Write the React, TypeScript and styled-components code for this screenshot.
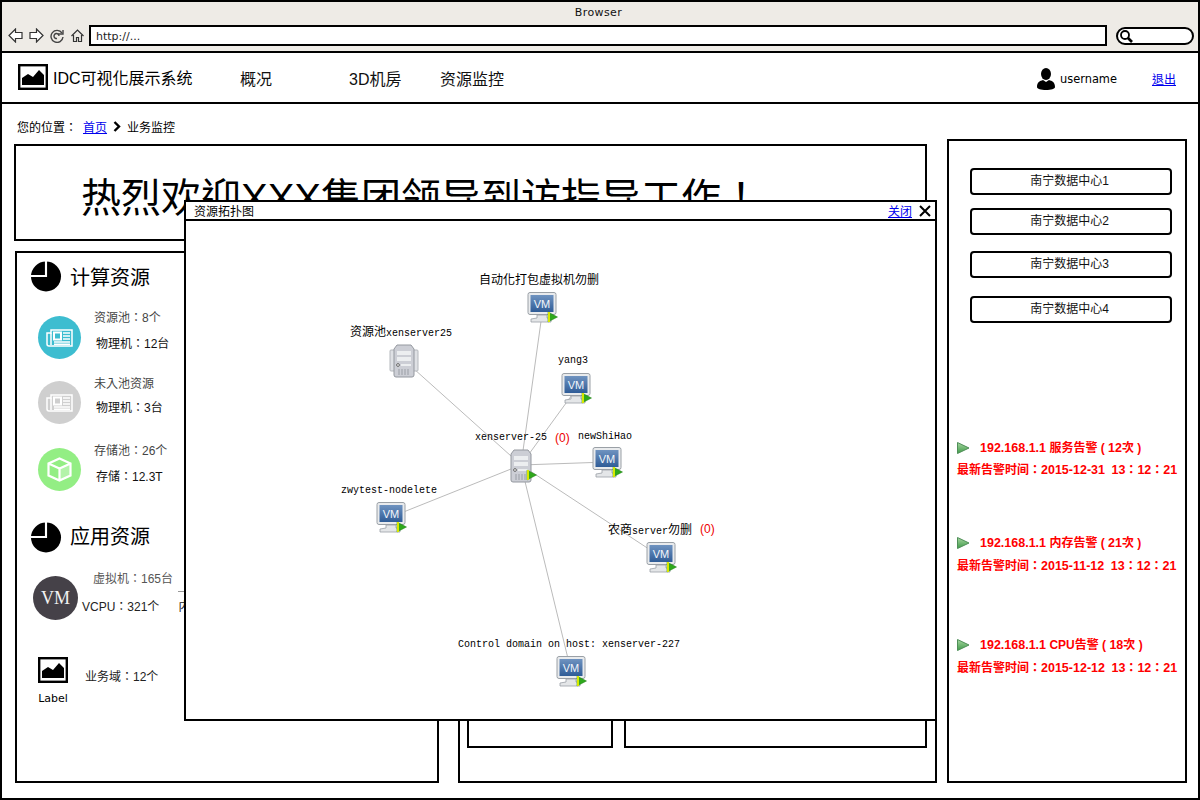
import styled, { createGlobalStyle } from 'styled-components';

const GlobalStyle = createGlobalStyle`
    * { box-sizing: border-box; }
    body {
        margin: 0;
        background: #fff;
        color: #000;
        font-family: 'Liberation Sans', 'Noto Sans CJK TC', sans-serif;
    }
    a { color: #0000ee; text-decoration: underline; }
`;

const ImageIcon = () => (
    <svg width='30' height='26' viewBox='0 0 30 26'>
        <rect x='1.2' y='1.2' width='27.6' height='23.6' fill='#fff' stroke='#000' strokeWidth='2.4' />
        <path d='M4 21 V14 L10 10 L15 13 L21 6 L26 11 V21 Z' fill='#000' />
    </svg>
);

const PieIcon = () => (
    <svg width='32' height='31' viewBox='0 0 32 32'>
        <circle cx='16' cy='16' r='15.5' fill='#000' />
        <path d='M16 0 V15.5 H0' fill='none' stroke='#fff' strokeWidth='2.2' />
    </svg>
);

const NewsIcon = () => (
    <svg width='27' height='18' viewBox='0 0 27 18' fill='none' stroke='#fff' strokeWidth='1.5'>
        <path d='M5 1 H26 V17 H3 a2 2 0 0 1 -2 -2 V4 H5 Z' />
        <path d='M5 4 V16' />
        <rect x='8' y='3.5' width='7' height='7' strokeWidth='2' />
        <path d='M17 4 H24 M17 7 H24 M17 10 H24 M8 13 H24 M8 15.2 H24' />
    </svg>
);

const CubeIcon = () => (
    <svg width='25' height='25' viewBox='0 0 25 25'>
        <path d='M13 12 L23 7 V18 L13 23 Z' fill='#fff' opacity='0.3' />
        <path
            d='M12.5 1.5 L23.5 6.5 V18.5 L12.5 23.5 L1.5 18.5 V6.5 Z M1.5 6.5 L12.5 11.5 L23.5 6.5 M12.5 11.5 V23.5'
            fill='none'
            stroke='#fff'
            strokeWidth='2.2'
        />
    </svg>
);

const UserIcon = () => (
    <svg width='18' height='22' viewBox='0 0 18 22'>
        <ellipse cx='9' cy='6' rx='5' ry='6' fill='#000' />
        <path d='M0 19 C0 14 3 13 6 12 L9 14 L12 12 C15 13 18 14 18 19 C18 21 14 22 9 22 C4 22 0 21 0 19 Z' fill='#000' />
    </svg>
);

const BackIcon = ({ flip }: { flip?: boolean }) => (
    <svg width='15' height='15' viewBox='0 0 15 15' style={flip ? { transform: 'scaleX(-1)' } : undefined}>
        <path d='M1 7.5 L7.5 1 V4.5 H14 V10.5 H7.5 V14 Z' fill='#fff' stroke='#333' strokeWidth='1.2' />
    </svg>
);

const ReloadIcon = () => (
    <svg width='14' height='14' viewBox='0 0 14 14' fill='none' stroke='#444' strokeWidth='1.4'>
        <path d='M12 4 A6 6 0 1 0 13 8' />
        <path d='M9 7 A2.5 2.5 0 1 0 7 9.5' />
        <path d='M8 5 H13 V1' />
    </svg>
);

const HomeIcon = () => (
    <svg width='13' height='13' viewBox='0 0 13 13' fill='none' stroke='#333' strokeWidth='1.2'>
        <path d='M0.5 7 L6.5 1 L12.5 7' />
        <path d='M2.5 6 V12.5 H5.5 V8.5 H7.5 V12.5 H10.5 V6' />
    </svg>
);

const SearchIcon = () => (
    <svg width='14' height='14' viewBox='0 0 14 14' fill='none' stroke='#000'>
        <circle cx='6' cy='6' r='4' strokeWidth='1.8' />
        <path d='M9 9 L13 13' strokeWidth='2.6' />
    </svg>
);

const ChevronIcon = () => (
    <svg width='8' height='11' viewBox='0 0 8 11' fill='none' stroke='#000' strokeWidth='2.4'>
        <path d='M1.5 1 L6 5.5 L1.5 10' />
    </svg>
);

const CloseIcon = () => (
    <svg width='12' height='12' viewBox='0 0 12 12' stroke='#000' strokeWidth='2'>
        <path d='M1 1 L11 11 M11 1 L1 11' />
    </svg>
);

const PlayBadge = ({ x, y }: { x: number; y: number }) => (
    <>
        <path d={`M${x} ${y} L${x + 9.5} ${y + 5} L${x} ${y + 10} Z`} fill='#2fa81c' stroke='#1d7d12' strokeWidth='0.5' />
        <path d={`M${x + 1} ${y} V${y + 10}`} stroke='#d6e800' strokeWidth='2' />
    </>
);

const VmIcon = () => (
    <svg width='32' height='32' viewBox='0 0 32 32'>
        <defs>
            <linearGradient id='vmScreen' x1='0' y1='0' x2='0' y2='1'>
                <stop offset='0' stopColor='#6f93c0' />
                <stop offset='1' stopColor='#2f5c97' />
            </linearGradient>
        </defs>
        <rect x='1' y='0.5' width='28' height='22' rx='2' fill='#e9ebed' stroke='#9aa0a6' />
        <rect x='3.5' y='3' width='23' height='17' fill='url(#vmScreen)' />
        <text x='15' y='16' textAnchor='middle' fontFamily='Liberation Sans' fontSize='11' fill='#f2f6fb'>
            VM
        </text>
        <path d='M10 23 H20 V26 H24 V30 H4 V27 L10 26 Z' fill='#e4e6e8' stroke='#9aa0a6' strokeWidth='0.8' />
        <PlayBadge x={21} y={20} />
    </svg>
);

const ServerIcon = ({ wings, badge }: { wings?: boolean; badge?: boolean }) => (
    <svg width='31' height='34' viewBox='0 0 31 34'>
        {wings && <rect x='1' y='6' width='28' height='21' rx='1' fill='#dfe1e5' stroke='#b5b8bd' />}
        <path d='M8 1 H22 L25 5 V31 a2 2 0 0 1 -2 2 H7 a2 2 0 0 1 -2 -2 V5 Z' fill='#ccced5' stroke='#94989f' />
        <rect x='8' y='7' width='14' height='4' fill='#eceef0' />
        <rect x='8' y='13' width='14' height='4' fill='#eceef0' />
        <circle cx='9' cy='21' r='1.4' fill='#fff' stroke='#666' />
        <rect x='12' y='20' width='10' height='2' fill='#eceef0' />
        <path d='M10 25 V31 M13 25 V31 M16 25 V31 M19 25 V31' stroke='#9a9ea5' />
        {badge && <PlayBadge x={21} y={21} />}
    </svg>
);

const AlertArrow = () => (
    <svg width='13' height='12' viewBox='0 0 13 12'>
        <defs>
            <linearGradient id='alertArrow' x1='0' y1='0' x2='0' y2='1'>
                <stop offset='0' stopColor='#a6d6a0' />
                <stop offset='1' stopColor='#3f9a48' />
            </linearGradient>
        </defs>
        <path d='M0.5 0.5 L12 6 L0.5 11.5 Z' fill='url(#alertArrow)' stroke='#4f8f58' />
    </svg>
);

// page coordinates of the diagram, the canvas starts at x=186 y=221
const originX = 186;
const originY = 221;
const hub = { x: 521, y: 465 };

const links = [
    { x: 543, y: 307 },
    { x: 577, y: 388 },
    { x: 404, y: 360 },
    { x: 607, y: 462 },
    { x: 391, y: 517 },
    { x: 661, y: 557 },
    { x: 571, y: 671 },
];

const vmNodes = [
    { x: 527, y: 292 },
    { x: 561, y: 373 },
    { x: 592, y: 447 },
    { x: 376, y: 502 },
    { x: 646, y: 542 },
    { x: 556, y: 656 },
];

const labels = [
    { x: 479, y: 279, cjk: '自动化打包虚拟机勿删', text: '' },
    { x: 350, y: 331, cjk: '资源池', text: 'xenserver25' },
    { x: 558, y: 361, cjk: '', text: 'yang3' },
    { x: 475, y: 438, cjk: '', text: 'xenserver-25', count: 80 },
    { x: 578, y: 437, cjk: '', text: 'newShiHao' },
    { x: 341, y: 491, cjk: '', text: 'zwytest-nodelete' },
    { x: 608, y: 529, cjk: '农商', text: 'server', tail: '勿删', count: 92 },
    { x: 458, y: 645, cjk: '', text: 'Control domain on host: xenserver-227' },
];

const dataCenters = [
    { name: '南宁数据中心1', top: 0 },
    { name: '南宁数据中心2', top: 13 },
    { name: '南宁数据中心3', top: 16 },
    { name: '南宁数据中心4', top: 18 },
];

const alerts = [
    { title: '192.168.1.1', kind: '服务告警', times: '12', time: '2015-12-31', top: 117, gap: 6 },
    { title: '192.168.1.1', kind: '内存告警', times: '21', time: '2015-11-12', top: 57, gap: 7 },
    { title: '192.168.1.1', kind: 'CPU告警', times: '18', time: '2015-12-12', top: 63, gap: 7 },
];

const App = () => (
    <>
        <GlobalStyle />
        <Frame>
            <BrowserBar>
                <BrowserTitle>Browser</BrowserTitle>
                <Toolbar>
                    <NavIcons>
                        <BackIcon />
                        <BackIcon flip />
                        <ReloadIcon />
                        <HomeIcon />
                    </NavIcons>
                    <UrlBox>http://...</UrlBox>
                    <SearchBox>
                        <SearchIcon />
                    </SearchBox>
                </Toolbar>
            </BrowserBar>

            <Header>
                <Brand>
                    <ImageIcon />
                    <span>IDC可视化展示系统</span>
                </Brand>
                <NavItem $width={109}>概况</NavItem>
                <NavItem $width={91}>3D机房</NavItem>
                <NavItem $width={80}>资源监控</NavItem>
                <UserArea>
                    <UserIcon />
                    <UserName>username</UserName>
                    <a href='#logout'>退出</a>
                </UserArea>
            </Header>

            <Main>
                <LeftColumn>
                    <Breadcrumb>
                        <span>您的位置：</span>
                        <a href='#home'>首页</a>
                        <ChevronIcon />
                        <span>业务监控</span>
                    </Breadcrumb>
                    <Banner>热烈欢迎XXX集团领导到访指导工作！</Banner>
                    <Cards>
                        <ResourceCard>
                            <SectionTitle>
                                <PieIcon />
                                <TitleText>计算资源</TitleText>
                            </SectionTitle>
                            <StatRow $top={24}>
                                <Circle $color='#3dbdd0'>
                                    <NewsIcon />
                                </Circle>
                                <StatText $top={-6} $gap={10}>
                                    <StatLabel>资源池：8个</StatLabel>
                                    <StatValue>物理机：12台</StatValue>
                                </StatText>
                            </StatRow>
                            <StatRow $top={22}>
                                <Circle $color='#cfcfcf'>
                                    <NewsIcon />
                                </Circle>
                                <StatText $top={-5} $gap={8}>
                                    <StatLabel>未入池资源</StatLabel>
                                    <StatValue>物理机：3台</StatValue>
                                </StatText>
                            </StatRow>
                            <StatRow $top={24}>
                                <Circle $color='#93ee84'>
                                    <CubeIcon />
                                </Circle>
                                <StatText $top={-5} $gap={10}>
                                    <StatLabel>存储池：26个</StatLabel>
                                    <StatValue>存储：12.3T</StatValue>
                                </StatText>
                            </StatRow>

                            <SectionTitle $top={31}>
                                <PieIcon />
                                <TitleText $raise>应用资源</TitleText>
                            </SectionTitle>
                            <VmRow>
                                <VmCircle>VM</VmCircle>
                                <VmText>
                                    <VmLabel>虚拟机：165台</VmLabel>
                                    <VmValues>
                                        <span>VCPU：321个</span>
                                        <MemoryValue>内存：64G</MemoryValue>
                                    </VmValues>
                                </VmText>
                            </VmRow>
                            <DomainRow>
                                <LabeledIcon>
                                    <ImageIcon />
                                    <span>Label</span>
                                </LabeledIcon>
                                <DomainText>业务域：12个</DomainText>
                            </DomainRow>
                        </ResourceCard>

                        <ChartCard>
                            <ChartBox $width={146} />
                            <ChartBox $width={303} />
                        </ChartCard>
                    </Cards>
                </LeftColumn>

                <RightPanel>
                    {dataCenters.map((center) => (
                        <CenterButton key={center.name} $top={center.top}>
                            {center.name}
                        </CenterButton>
                    ))}
                    {alerts.map((alert) => (
                        <AlertBlock key={alert.time} $top={alert.top} $gap={alert.gap}>
                            <AlertHead>
                                <AlertArrow />
                                <span>
                                    <Num>{alert.title}</Num> {alert.kind} ( <Num>{alert.times}</Num>次 )
                                </span>
                            </AlertHead>
                            <div>
                                最新告警时间：<Num>{alert.time} 13</Num>：<Num>12</Num>：<Num>21</Num>
                            </div>
                        </AlertBlock>
                    ))}
                </RightPanel>
            </Main>

            <Modal>
                <ModalHead>
                    <span>资源拓扑图</span>
                    <ModalActions>
                        <a href='#close'>关闭</a>
                        <CloseIcon />
                    </ModalActions>
                </ModalHead>
                <Canvas>
                    <LinkLayer width='749' height='497'>
                        {links.map((link) => (
                            <line
                                key={link.x}
                                x1={hub.x - originX}
                                y1={hub.y - originY}
                                x2={link.x - originX}
                                y2={link.y - originY}
                                stroke='#bbb'
                            />
                        ))}
                    </LinkLayer>
                    {vmNodes.map((node) => (
                        <Node key={node.x} style={{ left: node.x - originX, top: node.y - originY }}>
                            <VmIcon />
                        </Node>
                    ))}
                    <Node style={{ left: 389 - originX, top: 344 - originY }}>
                        <ServerIcon wings />
                    </Node>
                    <Node style={{ left: 506 - originX, top: 449 - originY }}>
                        <ServerIcon badge />
                    </Node>
                    {labels.map((label) => (
                        <NodeLabel
                            key={label.x}
                            style={{ left: label.x - originX, top: label.y - originY - 8 }}
                        >
                            {label.cjk && <Cjk>{label.cjk}</Cjk>}
                            {label.text}
                            {label.tail && <Cjk>{label.tail}</Cjk>}
                            {label.count !== undefined && <Count $left={label.count}>(0)</Count>}
                        </NodeLabel>
                    ))}
                </Canvas>
            </Modal>
        </Frame>
    </>
);

const Frame = styled.div`
    position: relative;
    width: 1200px;
    height: 800px;
    border: 2px solid #000;
    overflow: hidden;
    background: #fff;
`;

const BrowserBar = styled.div`
    height: 51px;
    background: #eeebe6;
    border-bottom: 2px solid #000;
`;

const BrowserTitle = styled.div`
    height: 20px;
    padding-top: 1px;
    padding-right: 3px;
    line-height: 20px;
    text-align: center;
    font-family: 'DejaVu Sans', sans-serif;
    font-size: 11px;
    letter-spacing: 0.4px;
    color: #111;
`;

const Toolbar = styled.div`
    display: flex;
    align-items: center;
    height: 21px;
    margin-top: 3px;
    padding-left: 6px;
`;

const NavIcons = styled.div`
    display: flex;
    align-items: center;
    gap: 6px;
    width: 81px;
    svg:nth-child(4) {
        margin-left: 1px;
    }
`;

const UrlBox = styled.div`
    width: 1018px;
    height: 21px;
    line-height: 19px;
    padding-left: 5px;
    background: #fff;
    border: 2px solid #000;
    font-family: 'DejaVu Sans', sans-serif;
    font-size: 11px;
    color: #222;
`;

const SearchBox = styled.div`
    display: flex;
    align-items: center;
    width: 78px;
    height: 18px;
    margin-left: 9px;
    padding-left: 1px;
    background: #fff;
    border: 2px solid #000;
    border-radius: 9px;
`;

const Header = styled.header`
    display: flex;
    align-items: center;
    height: 51px;
    padding-left: 16px;
    border-bottom: 2px solid #000;
    font-size: 16px;
`;

const Brand = styled.div`
    display: flex;
    align-items: center;
    gap: 5px;
    width: 222px;
    margin-top: -1px;
`;

const NavItem = styled.div<{ $width: number }>`
    width: ${(p) => p.$width}px;
    color: #111;
`;

const UserArea = styled.div`
    display: flex;
    align-items: center;
    margin-left: auto;
    margin-right: 22px;
    font-size: 12px;
    padding-top: 1px;
    svg {
        margin-top: 2px;
    }
`;

const UserName = styled.span`
    margin: 0 35px 0 5px;
    padding-top: 2px;
    font-family: 'DejaVu Sans', sans-serif;
    font-size: 11.4px;
`;

const Main = styled.main`
    display: flex;
    gap: 10px;
    height: 694px;
    padding-left: 12px;
`;

const LeftColumn = styled.div`
    width: 923px;
`;

const Breadcrumb = styled.nav`
    display: flex;
    align-items: center;
    height: 40px;
    padding: 4px 0 0 3px;
    font-size: 12px;
    a {
        margin-left: 6px;
    }
    svg {
        margin: 0 6px;
    }
`;

const Banner = styled.div`
    width: 913px;
    height: 97px;
    padding: 30px 0 0 65px;
    border: 2px solid #000;
    font-size: 40px;
    line-height: 44px;
`;

const Cards = styled.div`
    display: flex;
    gap: 19px;
    margin: 10px 0 0 1px;
`;

const ResourceCard = styled.section`
    width: 424px;
    height: 532px;
    padding: 8px 13px;
    border: 2px solid #000;
`;

const SectionTitle = styled.h2<{ $top?: number }>`
    display: flex;
    align-items: center;
    gap: 8px;
    height: 31px;
    margin: ${(p) => p.$top ?? 0}px 0 0;
    font-size: 20px;
    font-weight: 400;
    line-height: 31px;
`;

const TitleText = styled.span<{ $raise?: boolean }>`
    margin-top: ${(p) => (p.$raise ? 0 : 4)}px;
`;

const StatRow = styled.div<{ $top: number }>`
    display: flex;
    gap: 13px;
    margin: ${(p) => p.$top}px 0 0 8px;
`;

const Circle = styled.div<{ $color: string }>`
    display: flex;
    align-items: center;
    justify-content: center;
    width: 43px;
    height: 43px;
    border-radius: 50%;
    background: ${(p) => p.$color};
`;

const StatText = styled.div<{ $top: number; $gap: number }>`
    display: flex;
    flex-direction: column;
    gap: ${(p) => p.$gap}px;
    margin-top: ${(p) => p.$top}px;
    font-size: 12px;
    line-height: 16px;
`;

const StatLabel = styled.div`
    color: #444;
`;

const StatValue = styled.div`
    margin-left: 2px;
    color: #111;
`;

const VmRow = styled.div`
    display: flex;
    margin: 23px 0 0 3px;
`;

const VmCircle = styled.div`
    display: flex;
    align-items: center;
    justify-content: center;
    width: 45px;
    height: 44px;
    border-radius: 50%;
    background: #454148;
    color: #f2f2f2;
    font-family: 'Liberation Serif', serif;
    font-size: 18px;
`;

const VmText = styled.div`
    margin: -5px 0 0 4px;
    font-size: 12px;
    line-height: 16px;
`;

const VmLabel = styled.div`
    margin-left: 11px;
    color: #555;
`;

const VmValues = styled.div`
    display: flex;
    gap: 19px;
    margin-top: 12px;
    color: #222;
`;

const MemoryValue = styled.span`
    position: relative;
    &::before {
        content: '';
        position: absolute;
        left: 0;
        top: -8px;
        width: 6px;
        height: 1px;
        background: #999;
    }
`;

const DomainRow = styled.div`
    display: flex;
    margin: 37px 0 0 8px;
`;

const LabeledIcon = styled.div`
    display: flex;
    flex-direction: column;
    align-items: center;
    gap: 9px;
    width: 30px;
    font-family: 'DejaVu Sans', sans-serif;
    font-size: 11px;
    line-height: 14px;
`;

const DomainText = styled.div`
    margin: 12px 0 0 17px;
    font-size: 12px;
    line-height: 16px;
    color: #222;
`;

const ChartCard = styled.section`
    display: flex;
    align-items: flex-end;
    gap: 11px;
    width: 479px;
    height: 532px;
    padding: 0 8px 33px 7px;
    border: 2px solid #000;
`;

const ChartBox = styled.div<{ $width: number }>`
    width: ${(p) => p.$width}px;
    height: 200px;
    border: 2px solid #000;
`;

const RightPanel = styled.aside`
    width: 240px;
    height: 644px;
    margin-top: 35px;
    padding: 27px 8px 0;
    border: 2px solid #000;
`;

const CenterButton = styled.div<{ $top: number }>`
    width: 202px;
    height: 27px;
    margin: ${(p) => p.$top}px 0 0 13px;
    padding-right: 3px;
    border: 2px solid #000;
    border-radius: 4px;
    font-size: 12px;
    line-height: 23px;
    text-align: center;
    color: #111;
`;

const AlertBlock = styled.div<{ $top: number; $gap: number }>`
    display: flex;
    flex-direction: column;
    gap: ${(p) => p.$gap}px;
    margin-top: ${(p) => p.$top}px;
    color: #f00;
    font-size: 12px;
    font-weight: 700;
    line-height: 16px;
    white-space: nowrap;
`;

const AlertHead = styled.div`
    display: flex;
    align-items: center;
    gap: 10px;
`;

const Num = styled.span`
    font-size: 12.5px;
    word-spacing: 3px;
`;

const Modal = styled.div`
    position: absolute;
    left: 182px;
    top: 198px;
    width: 753px;
    height: 521px;
    background: #fff;
    border: 2px solid #000;
`;

const ModalHead = styled.div`
    display: flex;
    align-items: center;
    justify-content: space-between;
    height: 19px;
    padding: 0 4px 0 8px;
    border-bottom: 2px solid #000;
    font-size: 12px;
`;

const ModalActions = styled.div`
    display: flex;
    align-items: center;
    gap: 7px;
`;

const Canvas = styled.div`
    position: relative;
    height: 498px;
`;

const LinkLayer = styled.svg`
    position: absolute;
    left: 0;
    top: 0;
`;

const Node = styled.div`
    position: absolute;
    line-height: 0;
`;

const NodeLabel = styled.div`
    position: absolute;
    font-family: 'Liberation Mono', 'Noto Sans CJK TC', monospace;
    font-size: 10px;
    line-height: 16px;
    white-space: nowrap;
    color: #000;
`;

const Cjk = styled.span`
    font-family: 'Noto Sans CJK TC', sans-serif;
    font-size: 12px;
`;

const Count = styled.span<{ $left: number }>`
    position: absolute;
    left: ${(p) => p.$left}px;
    top: 0;
    font-family: 'Liberation Sans', sans-serif;
    font-size: 12px;
    color: #e00;
`;

export default App;
